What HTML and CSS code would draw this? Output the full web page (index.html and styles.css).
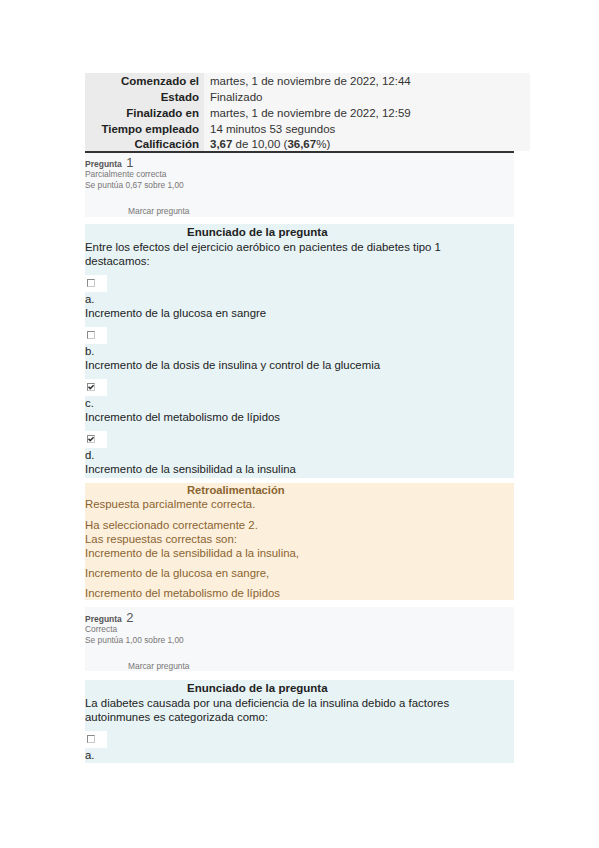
FILE: index.html
```html
<!DOCTYPE html>
<html lang="es">
<head>
<meta charset="utf-8">
<title>Revisión del intento</title>
<link rel="stylesheet" href="styles.css">
</head>
<body>
<div class="page">
  <table class="summary">
    <tr><th>Comenzado el</th><td>martes, 1 de noviembre de 2022, 12:44</td></tr>
    <tr><th>Estado</th><td>Finalizado</td></tr>
    <tr><th>Finalizado en</th><td>martes, 1 de noviembre de 2022, 12:59</td></tr>
    <tr><th>Tiempo empleado</th><td>14 minutos 53 segundos</td></tr>
    <tr class="last"><th>Calificación</th><td><b>3,67</b> de 10,00 (<b>36,67</b>%)</td></tr>
  </table>
  <div class="rule"></div>

  <div class="qinfo q1">
    <div class="qno"><span class="qlabel">Pregunta</span> <span class="qnum">1</span></div>
    <div class="qstate">Parcialmente correcta</div>
    <div class="qstate">Se puntúa 0,67 sobre 1,00</div>
    <div class="qflag">Marcar pregunta</div>
  </div>

  <div class="qtext q1t">
    <h4 class="head">Enunciado de la pregunta</h4>
    <div class="para">Entre los efectos del ejercicio aeróbico en pacientes de diabetes tipo 1 destacamos:</div>
    <div class="opt">
      <div class="cbwrap"><span class="cb"></span></div>
      <div class="line">a.</div>
      <div class="line">Incremento de la glucosa en sangre</div>
    </div>
    <div class="opt">
      <div class="cbwrap"><span class="cb"></span></div>
      <div class="line">b.</div>
      <div class="line">Incremento de la dosis de insulina y control de la glucemia</div>
    </div>
    <div class="opt">
      <div class="cbwrap"><span class="cb checked"><svg viewBox="0 0 8 8" width="8" height="8"><path d="M1.5 3.8 L3.2 5.6 L6.6 2.2" fill="none" stroke="#333" stroke-width="1.5"/></svg></span></div>
      <div class="line">c.</div>
      <div class="line">Incremento del metabolismo de lípidos</div>
    </div>
    <div class="opt">
      <div class="cbwrap"><span class="cb checked"><svg viewBox="0 0 8 8" width="8" height="8"><path d="M1.5 3.8 L3.2 5.6 L6.6 2.2" fill="none" stroke="#333" stroke-width="1.5"/></svg></span></div>
      <div class="line">d.</div>
      <div class="line">Incremento de la sensibilidad a la insulina</div>
    </div>
  </div>

  <div class="feedback">
    <h4 class="head">Retroalimentación</h4>
    <div class="fline">Respuesta parcialmente correcta.</div>
    <div class="fblock">Ha seleccionado correctamente 2.<br>Las respuestas correctas son:<br>Incremento de la sensibilidad a la insulina,</div>
    <div class="fblock">Incremento de la glucosa en sangre,</div>
    <div class="fblock">Incremento del metabolismo de lípidos</div>
  </div>

  <div class="qinfo q2">
    <div class="qno"><span class="qlabel">Pregunta</span> <span class="qnum">2</span></div>
    <div class="qstate">Correcta</div>
    <div class="qstate">Se puntúa 1,00 sobre 1,00</div>
    <div class="qflag">Marcar pregunta</div>
  </div>

  <div class="qtext q2t">
    <h4 class="head">Enunciado de la pregunta</h4>
    <div class="para">La diabetes causada por una deficiencia de la insulina debido a factores autoinmunes es categorizada como:</div>
    <div class="opt">
      <div class="cbwrap"><span class="cb"></span></div>
      <div class="line">a.</div>
    </div>
  </div>
</div>
</body>
</html>
```
FILE: styles.css
```css
html, body {
  margin: 0;
  padding: 0;
  background: #ffffff;
}
body {
  font-family: "Liberation Sans", Arial, sans-serif;
  color: #222222;
}
.page {
  padding: 73px 0 0 85px;
}
.summary {
  border-collapse: collapse;
  width: 445px;
  font-size: 11.5px;
}
.summary th,
.summary td {
  height: 16px;
  line-height: 16px;
  padding: 0;
  vertical-align: middle;
}
.summary .last th,
.summary .last td {
  height: 14px;
  line-height: 14px;
}
.summary th {
  width: 114px;
  padding-right: 5px;
  text-align: right;
  background: #ebebeb;
  font-weight: bold;
  color: #222;
  white-space: nowrap;
}
.summary td {
  padding-left: 6px;
  background: #f6f6f6;
  color: #333;
}
.rule {
  width: 429px;
  height: 2px;
  background: #333333;
}
.qinfo {
  width: 429px;
  background: #f7f8f9;
  padding-top: 2px;
  box-sizing: border-box;
  height: 64px;
}
.q2 {
  margin-top: 7px;
  padding-top: 2.5px;
}
.qno {
  height: 14px;
  line-height: 14px;
  color: #555;
}
.qlabel {
  font-size: 8.5px;
  font-weight: bold;
}
.qnum {
  font-size: 13px;
}
.qstate {
  font-size: 8.4px;
  line-height: 11px;
  height: 11px;
  color: #777;
}
.qflag {
  margin-top: 15px;
  padding-left: 43px;
  font-size: 8.4px;
  line-height: 11px;
  color: #777;
}
.qtext {
  width: 429px;
  background: #e7f3f5;
  padding: 1px 0 2px 0;
}
.q1t { margin-top: 7px; }
.q2t { margin-top: 9px; padding-bottom: 1px; }
.head {
  margin: 0;
  padding-left: 102px;
  font-size: 11.5px;
  line-height: 15px;
  font-weight: bold;
}
.para {
  font-size: 11.4px;
  line-height: 14px;
  padding-right: 30px;
}
.opt {
  margin-top: 7px;
}
.cbwrap {
  width: 22px;
  height: 17px;
  background: #ffffff;
  position: relative;
}
.cb {
  position: absolute;
  left: 2px;
  top: 4px;
  width: 8px;
  height: 8px;
  box-sizing: border-box;
  border: 1px solid #8a8a8a;
  border-right-color: #c8c8c8;
  border-bottom-color: #c8c8c8;
  background: #fff;
}
.cb svg {
  position: absolute;
  left: -1px;
  top: -1px;
}
.line {
  font-size: 11.4px;
  line-height: 14px;
  height: 14px;
  white-space: nowrap;
}
.feedback {
  width: 429px;
  margin-top: 5px;
  background: #fcefdc;
  color: #8a6430;
}
.feedback .head {
  line-height: 14px;
  font-size: 11.2px;
  color: #8a6430;
}
.fline {
  font-size: 11.4px;
  line-height: 14px;
}
.fblock {
  font-size: 11.4px;
  line-height: 14px;
  margin-top: 6px;
}
.fline + .fblock {
  margin-top: 7px;
}
```
